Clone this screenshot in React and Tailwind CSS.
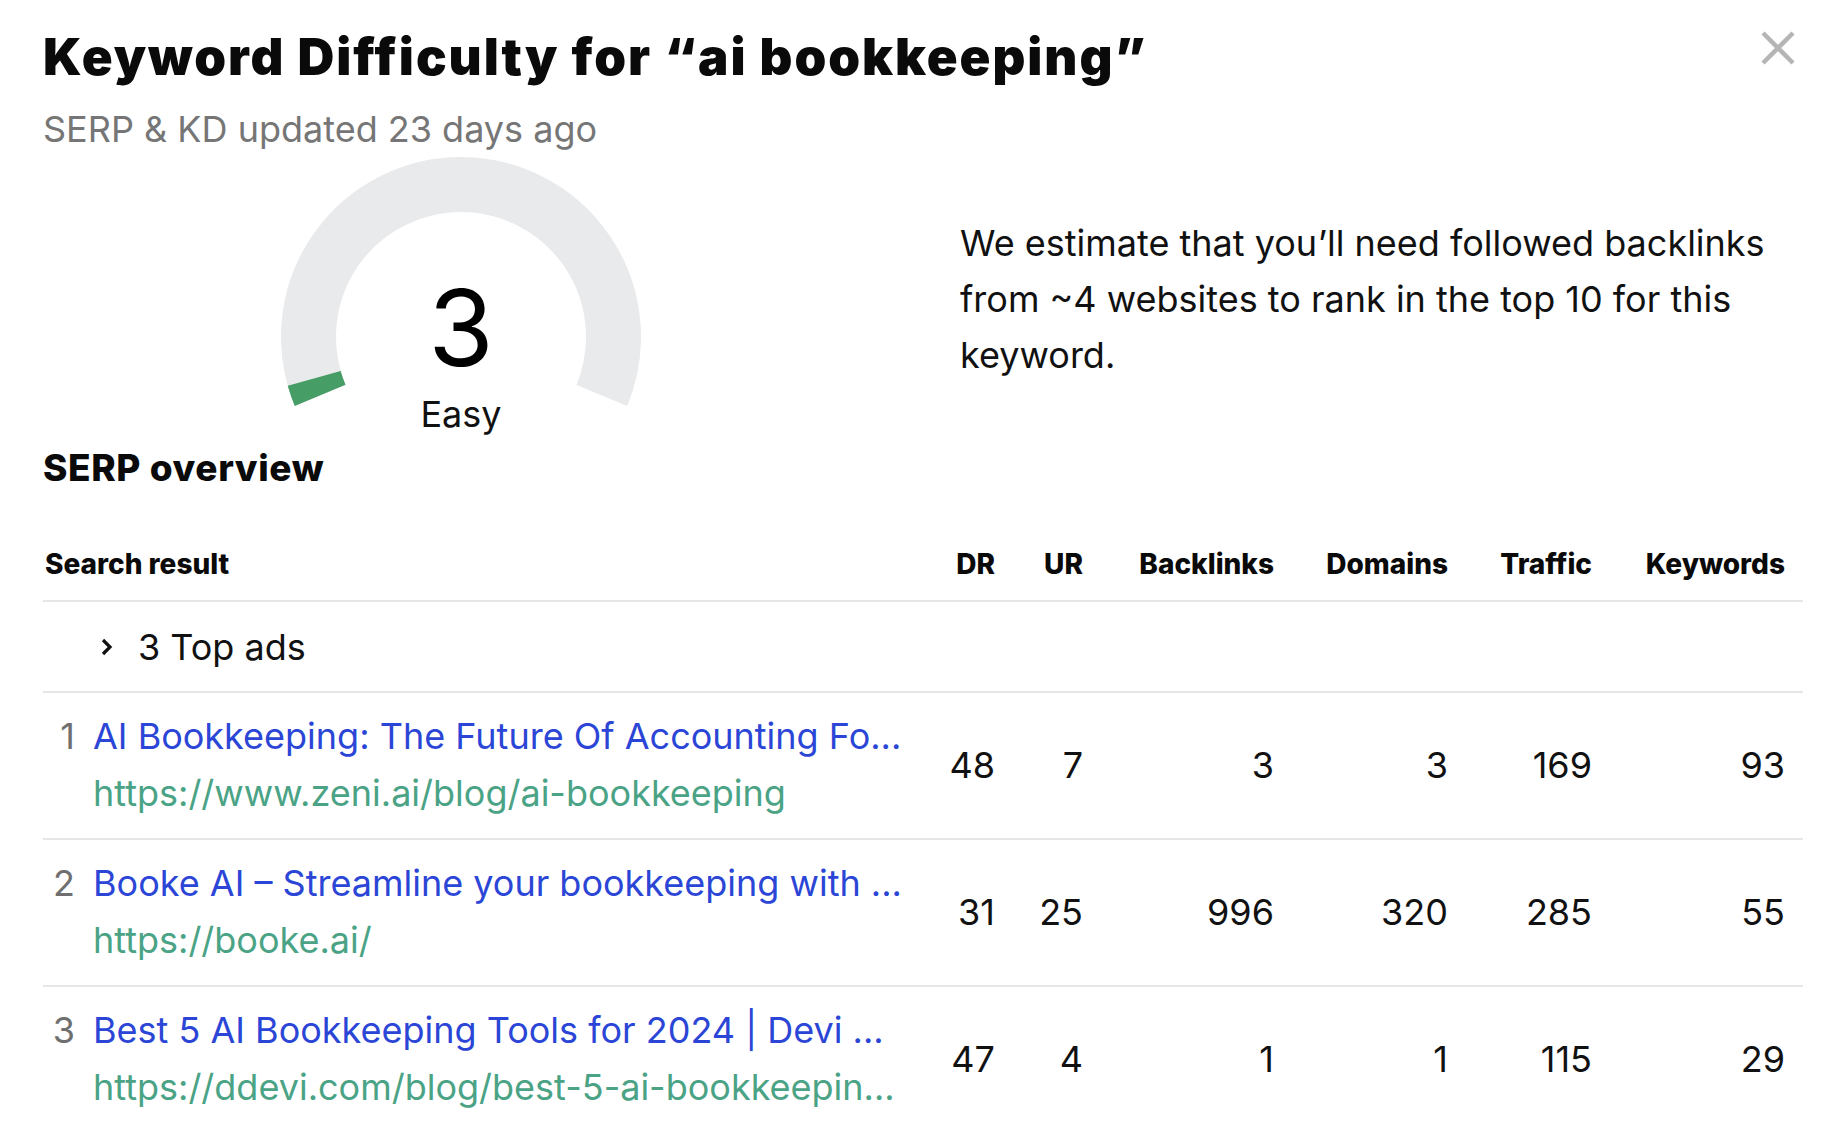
import React from "react";

const rows = [
  {
    rank: 1,
    title: "AI Bookkeeping: The Future Of Accounting Fo...",
    url: "https://www.zeni.ai/blog/ai-bookkeeping",
    dr: 48, ur: 7, backlinks: 3, domains: 3, traffic: 169, keywords: 93,
  },
  {
    rank: 2,
    title: "Booke AI – Streamline your bookkeeping with ...",
    url: "https://booke.ai/",
    dr: 31, ur: 25, backlinks: 996, domains: 320, traffic: 285, keywords: 55,
  },
  {
    rank: 3,
    title: "Best 5 AI Bookkeeping Tools for 2024 | Devi ...",
    url: "https://ddevi.com/blog/best-5-ai-bookkeepin...",
    dr: 47, ur: 4, backlinks: 1, domains: 1, traffic: 115, keywords: 29,
  },
];

const cols = "grid grid-cols-[882px_88px_88px_191px_174px_144px_193px]";

function Gauge() {
  // arc spans 225deg, from lower-left (157.5deg) clockwise to lower-right (22.5deg)
  return (
    <div className="relative w-[360px] h-[250px]">
      <svg width="360" height="250" viewBox="0 0 360 250">
        <path
          d="M 39.1 238.4 A 152.5 152.5 0 1 1 320.9 238.4"
          fill="none"
          stroke="#e9eaec"
          strokeWidth="55"
        />
        <path
          d="M 39.1 238.4 A 152.5 152.5 0 0 1 33.2 221.4"
          fill="none"
          stroke="#469d65"
          strokeWidth="55"
        />
      </svg>
      <div className="absolute left-0 right-0 top-[129px] text-center text-[106px] leading-[84px] text-black">
        3
      </div>
      <div className="absolute left-0 right-0 top-[238px] text-center text-[36px] leading-[38px] text-[#111]">
        Easy
      </div>
    </div>
  );
}

export default function App() {
  return (
    <div className="relative w-[1840px] h-[1130px] overflow-hidden bg-white font-[Inter,sans-serif] pl-[43px] pr-[37px]">
      <button className="absolute right-[45px] top-[31px] w-[34px] h-[34px]">
        <svg width="34" height="34" viewBox="0 0 34 34">
          <path d="M2 2 L32 32 M32 2 L2 32" stroke="#b5b5b5" strokeWidth="4.5" />
        </svg>
      </button>

      <h1 className="pt-[29px] text-[51px] leading-[56px] font-black text-[#0a0a0a] tracking-[1.95px]">
        Keyword Difficulty for “ai bookkeeping”
      </h1>
      <p className="mt-[20px] text-[36px] leading-[48px] text-[#767676]">
        SERP &amp; KD updated 23 days ago
      </p>

      <div className="flex mt-[4px]">
        <div className="w-[838px] flex justify-center">
          <Gauge />
        </div>
        <p className="ml-[81px] w-[845px] pt-[58px] text-[36px] leading-[56px] text-[#111]">
          We estimate that you’ll need followed backlinks from ~4 websites to rank in the top 10 for this keyword.
        </p>
      </div>

      <h2 className="mt-[39px] text-[37px] leading-[44px] font-extrabold tracking-[0.6px] text-[#0a0a0a]">SERP overview</h2>

      <div className={`${cols} mt-[56px] pb-[18px] text-[28px] leading-[36px] font-extrabold text-[#0a0a0a]`}>
        <div className="pl-[2px]">Search result</div>
        <div className="text-right pr-[18px]">DR</div>
        <div className="text-right pr-[18px]">UR</div>
        <div className="text-right pr-[18px]">Backlinks</div>
        <div className="text-right pr-[18px]">Domains</div>
        <div className="text-right pr-[18px]">Traffic</div>
        <div className="text-right pr-[18px]">Keywords</div>
      </div>

      <div className="border-t-2 border-[#e6e6e6] h-[91px] flex items-center pl-[57px] gap-[24px] text-[36px] text-[#111]">
        <svg width="14" height="20" viewBox="0 0 14 20">
          <path d="M3 3 L10 10 L3 17" fill="none" stroke="#111" strokeWidth="3.2" />
        </svg>
        <span>3 Top ads</span>
      </div>

      {rows.map((r) => (
        <div
          key={r.rank}
          className={`${cols} border-t-2 border-[#e6e6e6] pt-[15px] pb-[16px] text-[36px] leading-[57px]`}
        >
          <div className="flex min-w-0">
            <div className="w-[32px] shrink-0 text-right text-[#6f6f6f]">{r.rank}</div>
            <div className="ml-[18px] min-w-0 whitespace-nowrap overflow-hidden">
              <div className="text-[#2b46d6]">{r.title}</div>
              <div className="text-[#4ba386]">{r.url}</div>
            </div>
          </div>
          {[r.dr, r.ur, r.backlinks, r.domains, r.traffic, r.keywords].map((v, i) => (
            <div key={i} className="self-center text-right pr-[18px] text-[#111]">
              {v}
            </div>
          ))}
        </div>
      ))}
    </div>
  );
}
